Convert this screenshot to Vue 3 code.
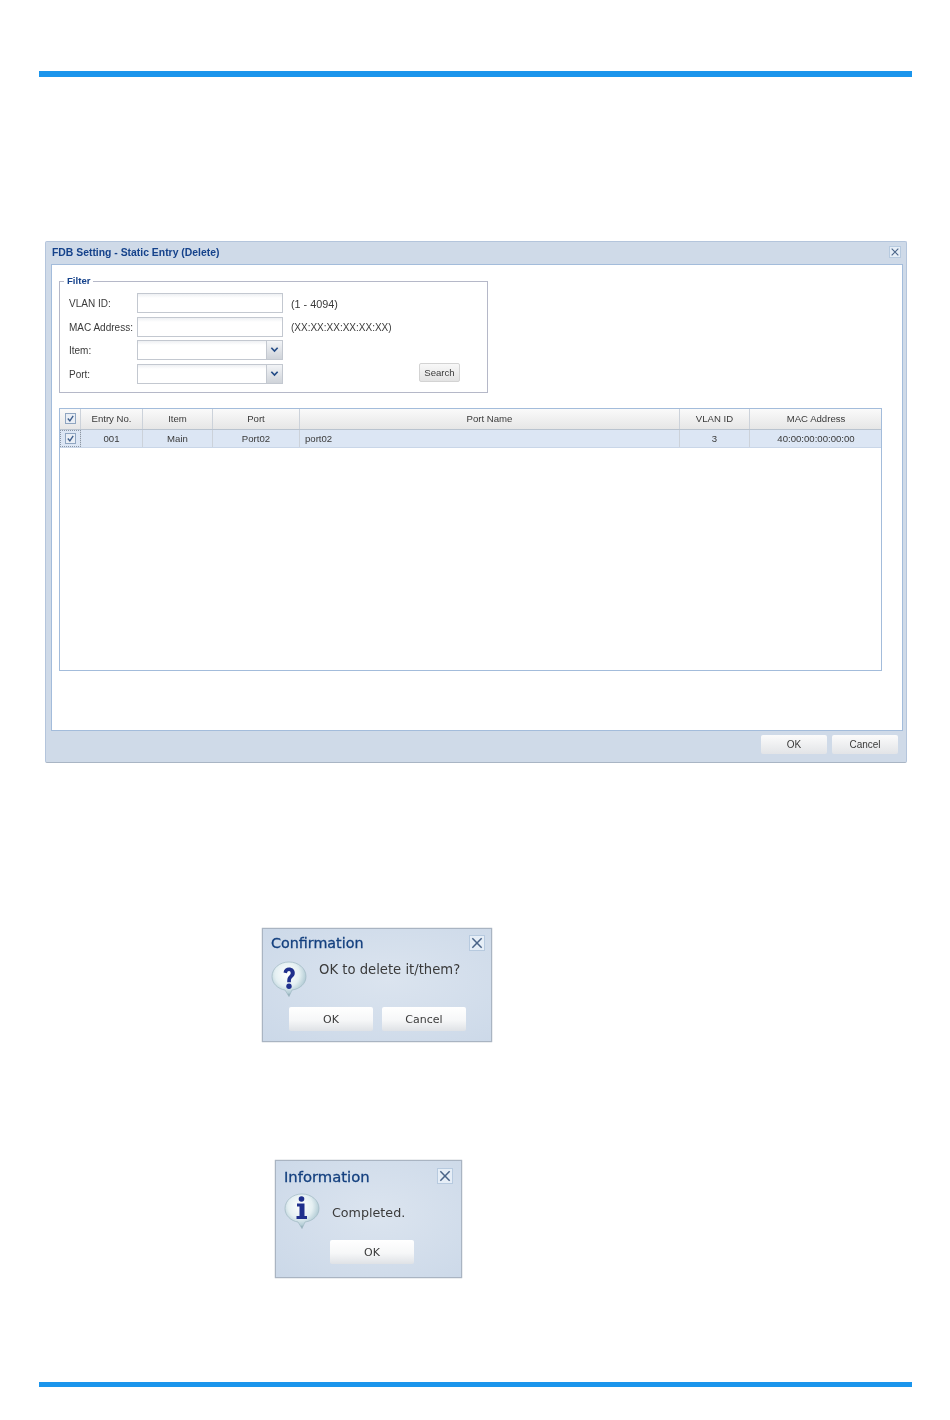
<script setup>
const columns = [
  { label: 'Entry No.', width: '62px' },
  { label: 'Item', width: '70px' },
  { label: 'Port', width: '87px' },
  { label: 'Port Name', width: '380px' },
  { label: 'VLAN ID', width: '70px' },
  { label: 'MAC Address', width: '132px' }
]
const row = ['001', 'Main', 'Port02', 'port02', '3', '40:00:00:00:00:00']
const template = '21px ' + columns.map(c => c.width).join(' ')
</script>

<template>
  <div class="page">
    <div class="rule top"></div>

    <section class="dialog">
      <header class="dialog-title">
        <span>FDB Setting - Static Entry (Delete)</span>
        <span class="close small"><svg viewBox="0 0 12 12"><path d="M2 2 10 10M10 2 2 10" /></svg></span>
      </header>
      <div class="dialog-body">
        <fieldset class="filter">
          <legend>Filter</legend>
          <div class="form">
            <label>VLAN ID:</label><div class="input"></div><span class="hint">(1 - 4094)</span>
            <label>MAC Address:</label><div class="input"></div><span class="hint mac">(XX:XX:XX:XX:XX:XX)</span>
            <label>Item:</label>
            <div class="input combo"><span class="arrow"><svg viewBox="0 0 10 8"><path d="M1.5 1.5 5 5.2 8.5 1.5" /></svg></span></div>
            <span></span>
            <label>Port:</label>
            <div class="input combo"><span class="arrow"><svg viewBox="0 0 10 8"><path d="M1.5 1.5 5 5.2 8.5 1.5" /></svg></span></div>
            <span class="search-cell"><button class="search">Search</button></span>
          </div>
        </fieldset>

        <div class="grid">
          <div class="grid-row head" :style="{ gridTemplateColumns: template }">
            <div class="cell check"><span class="box"><svg viewBox="0 0 10 10"><path d="M2 5 4.300 7.600 8 2" /></svg></span></div>
            <div v-for="c in columns" :key="c.label" class="cell">{{ c.label }}</div>
          </div>
          <div class="grid-row data" :style="{ gridTemplateColumns: template }">
            <div class="cell check focus"><span class="box"><svg viewBox="0 0 10 10"><path d="M2 5 4.300 7.600 8 2" /></svg></span></div>
            <div v-for="(v, i) in row" :key="i" class="cell" :class="{ left: i === 3 }">{{ v }}</div>
          </div>
        </div>
      </div>
      <footer class="dialog-foot">
        <button class="foot-btn">OK</button>
        <button class="foot-btn">Cancel</button>
      </footer>
    </section>

    <section class="msg confirm">
      <header class="msg-head">
        <span class="msg-title">Confirmation</span>
        <span class="close"><svg viewBox="0 0 12 12"><path d="M2 2 10 10M10 2 2 10" /></svg></span>
      </header>
      <div class="msg-main">
        <svg class="bubble" viewBox="0 0 36 36">
          <defs>
            <radialGradient id="bq" cx="45%" cy="35%" r="65%">
              <stop offset="0" stop-color="#ffffff" /><stop offset=".55" stop-color="#e4eff2" /><stop offset=".85" stop-color="#b4cdd6" /><stop offset="1" stop-color="#6f8f9c" />
            </radialGradient>
          </defs>
          <path d="M18 1C8.500 1 1 7.500 1 15.500 1 22.500 7 28 14 29L18 35.500 21 29C29 28 35 22.500 35 15.500 35 7.500 27.500 1 18 1Z" fill="url(#bq)" stroke="#9fb8c2" stroke-width=".7" />
          <path d="M12.500 11.500C13 8.300 15.200 6.500 18 6.500 21.300 6.500 23.800 8.700 23.800 12 23.800 14.500 22.400 15.700 21 16.900 20 17.800 19.900 18.800 19.900 21.200H16.200C16.200 17.800 16.600 16.400 18 15.100 19 14.100 19.700 13.400 19.700 12.100 19.700 10.800 19.100 10 18 10 16.900 10 16.200 10.900 16 12.300Z" fill="#1f2f8c" />
          <circle cx="18" cy="25.300" r="2.700" fill="#1f2f8c" />
        </svg>
        <span class="msg-text confirm-text">OK to delete it/them?</span>
      </div>
      <div class="msg-actions">
        <button class="msg-btn">OK</button>
        <button class="msg-btn">Cancel</button>
      </div>
    </section>

    <section class="msg info">
      <header class="msg-head">
        <span class="msg-title wide">Information</span>
        <span class="close"><svg viewBox="0 0 12 12"><path d="M2 2 10 10M10 2 2 10" /></svg></span>
      </header>
      <div class="msg-main">
        <svg class="bubble" viewBox="0 0 36 36">
          <defs>
            <radialGradient id="bi" cx="45%" cy="35%" r="65%">
              <stop offset="0" stop-color="#ffffff" /><stop offset=".55" stop-color="#e4eff2" /><stop offset=".85" stop-color="#b4cdd6" /><stop offset="1" stop-color="#6f8f9c" />
            </radialGradient>
          </defs>
          <path d="M18 1C8.500 1 1 7.500 1 15.500 1 22.500 7 28 14 29L18 35.500 21 29C29 28 35 22.500 35 15.500 35 7.500 27.500 1 18 1Z" fill="url(#bi)" stroke="#9fb8c2" stroke-width=".7" />
          <circle cx="17.500" cy="6" r="2.800" fill="#1f2f8c" />
          <path d="M13 10.500H20.500V23H23V26H12.500V23H15.500V13.500H13Z" fill="#1f2f8c" />
        </svg>
        <span class="msg-text info-text">Completed.</span>
      </div>
      <div class="msg-actions center">
        <button class="msg-btn">OK</button>
      </div>
    </section>

    <div class="rule bottom"></div>
  </div>
</template>

<style scoped>
.page {
  width: 950px;
  height: 1420px;
  box-sizing: border-box;
  padding-top: 71px;
  overflow: hidden;
  background: #fff;
  font-family: "Liberation Sans", Arial, sans-serif;
  color: #3a3a3a;
}
.rule { margin: 0 38px 0 39px; background: #1b95ec; }
.rule.top { height: 6px; }
.rule.bottom { height: 5px; margin-top: 104px; }

.dialog {
  width: 862px;
  height: 522px;
  margin: 164px 0 0 45px;
  box-sizing: border-box;
  display: flex;
  flex-direction: column;
  background: #cfdae8;
  border: 1px solid #b4c5dc;
  border-bottom-color: #a9b5c4;
  border-radius: 2px;
  filter: blur(.25px);
}
.dialog-title {
  height: 22px;
  flex: none;
  display: flex;
  align-items: center;
  justify-content: space-between;
  padding: 0 5px 2px 6px;
  box-sizing: border-box;
  font-size: 10.4px;
  font-weight: 700;
  color: #15428b;
}
.dialog-body {
  flex: 1;
  margin: 0 3px 0 5px;
  padding: 0 7px;
  box-sizing: border-box;
  background: #fff;
  border: 1px solid #a3bcdb;
}
.dialog-foot {
  height: 31px;
  flex: none;
  display: flex;
  justify-content: flex-end;
  align-items: flex-start;
  gap: 5px;
  padding: 4px 8px 0 0;
  box-sizing: border-box;
}
.close {
  width: 16px;
  height: 16px;
  flex: none;
  box-sizing: border-box;
  display: flex;
  background: #e6eef7;
  border: 1px solid #b7cadf;
}
.close.small { width: 12px; height: 12px; }
.close svg { width: 100%; height: 100%; }
.close path { fill: none; stroke: #4a6488; stroke-width: 1.3; }

.filter {
  width: 429px;
  height: 118px;
  margin: 10px 0 0 0;
  padding: 0;
  box-sizing: border-box;
  border: 1px solid #b5b8c8;
}
.filter legend {
  margin-left: 4px;
  padding: 0 3px;
  font-size: 9.6px;
  font-weight: 700;
  line-height: 12px;
  color: #15428b;
}
.form {
  display: grid;
  grid-template-columns: 68px 146px 1fr;
  grid-template-rows: 24px 23px 24px 20px;
  margin: 6px 27px 0 9px;
  font-size: 10px;
}
.form label { line-height: 20px; padding-top: 1px; }
.input {
  height: 20px;
  box-sizing: border-box;
  display: flex;
  justify-content: flex-end;
  background: linear-gradient(#eef0f3, #fff 4px);
  border: 1px solid #c3c8d0;
}
.arrow {
  width: 15px;
  display: flex;
  align-items: center;
  justify-content: center;
  background: linear-gradient(#f2f4f7, #cfd3d9);
  border-left: 1px solid #c3c8d0;
}
.arrow svg { width: 9px; height: 8px; }
.arrow path { fill: none; stroke: #234b86; stroke-width: 1.8; }
.hint { line-height: 20px; padding: 1px 0 0 8px; font-size: 10.8px; }
.hint.mac { font-size: 10px; }
.search-cell { display: flex; justify-content: flex-end; margin-top: -1px; }
.search {
  width: 41px;
  height: 19px;
  padding: 0;
  font: 9.6px "Liberation Sans", Arial, sans-serif;
  color: #3a3a3a;
  background: linear-gradient(#f8f8f8, #e3e3e3);
  border: 1px solid #d3d3d3;
  border-radius: 2px;
}

.grid {
  width: 823px;
  height: 263px;
  margin-top: 15px;
  box-sizing: border-box;
  border: 1px solid #a3bcdb;
}
.grid-row { display: grid; font-size: 9.6px; }
.head {
  height: 20px;
  background: linear-gradient(#fafafa, #e6e6e6);
  border-bottom: 1px solid #b9c3cf;
}
.data {
  height: 18px;
  box-sizing: border-box;
  background: #dce6f4;
  border-bottom: 1px solid #c9d6e8;
}
.cell {
  display: flex;
  align-items: center;
  justify-content: center;
  padding-bottom: 1px;
  box-sizing: border-box;
  border-right: 1px solid #ccd2da;
  min-width: 0;
  white-space: nowrap;
}
.cell:last-child { border-right: 0; }
.cell.left { justify-content: flex-start; padding-left: 5px; }
.cell.focus { outline: 1px dotted #8a97a8; outline-offset: -1px; }
.box {
  width: 11px;
  height: 11px;
  box-sizing: border-box;
  display: flex;
  background: #e9eef5;
  border: 1px solid #8fa5c0;
}
.box svg { width: 100%; height: 100%; }
.box path { fill: none; stroke: #3f5f8c; stroke-width: 1.5; }

.foot-btn {
  width: 66px;
  height: 19px;
  padding: 0;
  font: 10px "Liberation Sans", Arial, sans-serif;
  color: #3a3a3a;
  background: linear-gradient(#fbfbfb, #e2e4e7);
  border: 0;
  border-radius: 2px;
}

.msg {
  box-sizing: border-box;
  background: radial-gradient(ellipse at 55% 45%, #dbe4ef, #cbd8e8);
  border: 1px solid #a9b4c2;
  box-shadow: 0 0 1px #8d99a8;
  filter: blur(.4px);
}
.msg.confirm {
  width: 230px;
  height: 114px;
  margin: 165px 0 0 262px;
  padding: 6px 6px 0 8px;
}
.msg.info {
  width: 187px;
  height: 118px;
  margin: 118px 0 0 275px;
  padding: 7px 8px 0 8px;
}
.msg-head {
  height: 16px;
  display: flex;
  align-items: center;
  justify-content: space-between;
}
.msg-title {
  font-family: "DejaVu Sans", sans-serif;
  font-size: 14.3px;
  color: #14407f;
  -webkit-text-stroke: .3px #14407f;
}
.msg-title.wide { font-size: 14.8px; }
.msg-main { display: flex; }
.bubble { width: 36px; height: 36px; flex: none; }
.msg-text {
  font-family: "DejaVu Sans", sans-serif;
  color: #3a3a3a;
}
.confirm .msg-main { height: 46px; margin-top: 10px; }
.info .msg-main { height: 47px; margin-top: 9px; }
.confirm-text { margin: 1px 0 0 12px; line-height: 16px; font-size: 13.2px; }
.info-text { margin: 12px 0 0 12px; line-height: 16px; font-size: 12.7px; }
.msg-actions {
  display: flex;
  gap: 9px;
  padding-left: 18px;
}
.msg-actions.center { padding-left: 46px; }
.msg-btn {
  width: 84px;
  height: 24px;
  padding: 0;
  font: 11px "DejaVu Sans", sans-serif;
  color: #3a3a3a;
  background: linear-gradient(#ffffff, #f6f7f8 55%, #dfe2e6);
  border: 0;
  border-radius: 2px;
}
</style>
